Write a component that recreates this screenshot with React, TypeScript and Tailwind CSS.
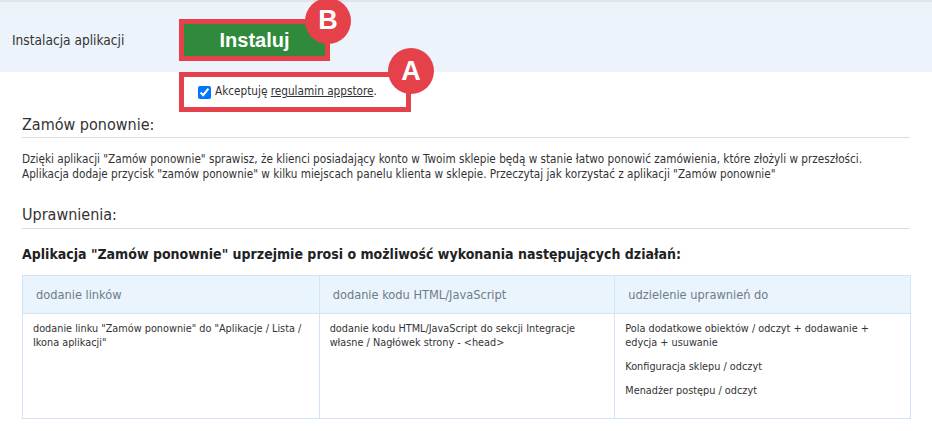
import React from "react";

function Badge({ letter, className }: { letter: string; className: string }) {
  return (
    <div
      className={`absolute w-[46px] h-[46px] rounded-full bg-[#e5414b] text-white flex items-center justify-center text-[27px] font-bold font-['Liberation_Sans',Arial,sans-serif] [font-stretch:normal] ${className}`}
    >
      {letter}
    </div>
  );
}

export default function App() {
  return (
    <div className="w-[932px] h-[431px] bg-white text-[#333] overflow-hidden font-['DejaVu_Sans_Condensed','DejaVu_Sans',Verdana,sans-serif] [font-stretch:condensed]">
      <div className="border-t-2 border-[#e2e4e8]" />
      <div className="h-[70px] bg-[#ecf3fb] flex items-center">
        <div className="pl-3 w-[179px] text-[13.6px] text-[#333] mt-[6px]">Instalacja aplikacji</div>
        <div className="relative mt-[5px]">
          <div className="border-[5px] border-[#e5414b]">
            <div className="w-[141px] h-[32px] bg-[#2f8b3b] flex items-center justify-center text-white font-bold text-[20px] font-['Liberation_Sans',Arial,sans-serif] [font-stretch:normal]">
              Instaluj
            </div>
          </div>
          <Badge letter="B" className="left-[126px] top-[-21px]" />
        </div>
      </div>
      <div className="ml-[179px] relative w-[232px] h-[40px] border-[5px] border-[#e5414b] flex items-center pl-[14px] gap-[4px] text-[11.7px]">
        <input type="checkbox" checked readOnly className="w-[13px] h-[13px] m-0 accent-[#0075ff]" />
        <span>
          Akceptuję <span className="underline">regulamin appstore</span>.
        </span>
        <Badge letter="A" className="left-[204px] top-[-29px]" />
      </div>
      <div className="px-[22px]">
        <h2 className="mt-[3px] text-[16px] leading-[20px] pb-[2px] border-b border-[#dcdcdc]">Zamów ponownie:</h2>
        <p className="mt-[14px] text-[11.65px] leading-[15px]">
          Dzięki aplikacji "Zamów ponownie" sprawisz, że klienci posiadający konto w Twoim sklepie będą w stanie łatwo ponowić zamówienia, które złożyli w przeszłości.
          <br />
          Aplikacja dodaje przycisk "zamów ponownie" w kilku miejscach panelu klienta w sklepie. Przeczytaj jak korzystać z aplikacji "Zamów ponownie"
        </p>
        <h2 className="mt-[23px] text-[16px] leading-[20px] pb-[3px] border-b border-[#dcdcdc]">Uprawnienia:</h2>
        <h3 className="mt-[16px] text-[14px] font-bold leading-[18px] text-[#222]">
          Aplikacja "Zamów ponownie" uprzejmie prosi o możliwość wykonania następujących działań:
        </h3>
        <div className="mt-[12px] w-[889px] border border-[#d3e5f5] grid grid-cols-3">
          <div className="h-[38px] bg-[#eaf4fd] border-b border-[#d3e5f5] flex items-center pl-[13px] text-[12.7px] text-[#6e7b88]">dodanie linków</div>
          <div className="h-[38px] bg-[#eaf4fd] border-b border-l border-[#d3e5f5] flex items-center pl-[13px] text-[12.7px] text-[#6e7b88]">dodanie kodu HTML/JavaScript</div>
          <div className="h-[38px] bg-[#eaf4fd] border-b border-l border-[#d3e5f5] flex items-center pl-[13px] text-[12.7px] text-[#6e7b88]">udzielenie uprawnień do</div>
          <div className="h-[104px] pt-[8px] pl-[10px] pr-[10px] text-[10.8px] leading-[14px]">
            dodanie linku "Zamów ponownie" do "Aplikacje / Lista / Ikona aplikacji"
          </div>
          <div className="h-[104px] pt-[8px] pl-[10px] pr-[10px] border-l border-[#d3e5f5] text-[10.8px] leading-[14px]">
            dodanie kodu HTML/JavaScript do sekcji Integracje własne / Nagłówek strony - &lt;head&gt;
          </div>
          <div className="h-[104px] pt-[8px] pl-[10px] pr-[20px] border-l border-[#d3e5f5] text-[10.8px] leading-[14px] flex flex-col gap-[10px]">
            <div>Pola dodatkowe obiektów / odczyt + dodawanie + edycja + usuwanie</div>
            <div>Konfiguracja sklepu / odczyt</div>
            <div>Menadżer postępu / odczyt</div>
          </div>
        </div>
      </div>
    </div>
  );
}
